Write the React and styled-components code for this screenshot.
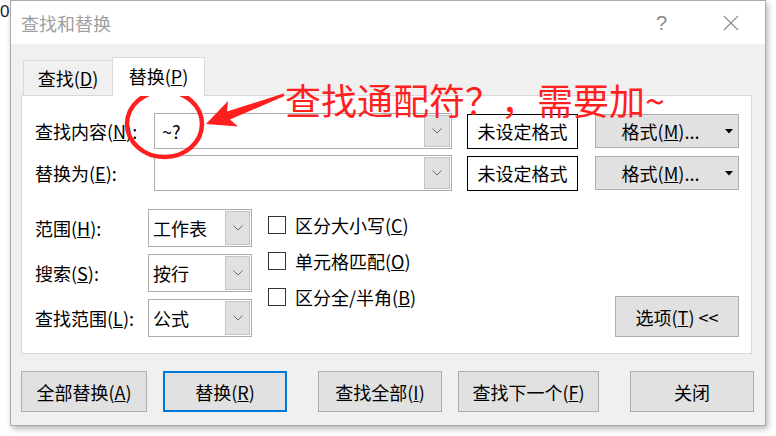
import React from "react";
import styled, { createGlobalStyle } from "styled-components";

const GlobalStyle = createGlobalStyle`
  html, body {
    margin: 0;
    padding: 0;
    background: #fff;
  }
  body {
    font-family: "Noto Sans CJK SC", "Noto Sans", sans-serif;
    color: #000;
  }
`;

const Page = styled.div`
  position: relative;
  display: flex;
  align-items: flex-start;
  width: 776px;
  height: 436px;
  overflow: hidden;
`;

const Stray = styled.span`
  width: 10px;
  padding-top: 3px;
  font: 17px/17px "Liberation Sans", sans-serif;
  color: #1c1c2c;
`;

const Window = styled.div`
  width: 756px;
  height: 426px;
  box-sizing: border-box;
  border: 1px solid #aaaaaa;
  box-shadow: 2px 3px 6px rgba(0, 0, 0, 0.28);
  background: #f0f0f0;
  display: flex;
  flex-direction: column;
`;

const TitleBar = styled.div`
  height: 43px;
  flex: none;
  background: #fff;
  display: flex;
  align-items: center;
  padding-left: 10px;
`;

const Title = styled.span`
  font-size: 18px;
  line-height: 20px;
  color: #a0a0a0;
  flex: 1;
`;

const CaptionButton = styled.div`
  width: 69px;
  height: 43px;
  display: flex;
  align-items: center;
  justify-content: center;
  color: #8a8a8a;
  font: 20px/1 "Liberation Sans", sans-serif;
`;

const Body = styled.div`
  flex: 1;
  display: flex;
  flex-direction: column;
  padding: 13px 0 0 10px;
`;

const TabStrip = styled.div`
  display: flex;
  align-items: flex-end;
  margin-left: 2px;
  margin-bottom: -1px;
  position: relative;
  z-index: 1;
`;

const Tab = styled.div`
  box-sizing: border-box;
  width: ${(p) => (p.$active ? 93 : 90)}px;
  height: ${(p) => (p.$active ? 39 : 36)}px;
  margin-left: ${(p) => (p.$active ? -1 : 0)}px;
  border: 1px solid #d9d9d9;
  border-bottom: ${(p) => (p.$active ? "none" : "1px solid #d9d9d9")};
  background: ${(p) => (p.$active ? "#fff" : "#f0f0f0")};
  display: flex;
  align-items: center;
  justify-content: center;
  font-size: 18px;
  padding-bottom: ${(p) => (p.$active ? 2 : 0)}px;
`;

const Panel = styled.div`
  box-sizing: border-box;
  width: 731px;
  height: 259px;
  border: 1px solid #d9d9d9;
  background: #fff;
  padding: 17px 12px 0 13px;
  display: flex;
  flex-direction: column;
`;

const FieldRow = styled.div`
  display: flex;
  align-items: center;
  height: 36px;
  & + & {
    margin-top: 6px;
  }
`;

const Label = styled.span`
  width: ${(p) => p.$width}px;
  flex: none;
  font-size: 18px;
  white-space: nowrap;
`;

const Combo = styled.div`
  box-sizing: border-box;
  width: ${(p) => p.$width}px;
  height: ${(p) => p.$height}px;
  border: 1px solid #acacac;
  background: #fff;
  display: flex;
  align-items: stretch;
  padding: 1px;
`;

const ComboText = styled.span`
  flex: 1;
  display: flex;
  align-items: center;
  padding-left: ${(p) => p.$pad}px;
  font-size: 18px;
`;

const DropButton = styled.span`
  box-sizing: border-box;
  width: ${(p) => p.$width}px;
  border: 1px solid #c4c4c4;
  background: #e1e1e1;
  display: flex;
  align-items: center;
  justify-content: center;
`;

const FormatBox = styled.div`
  box-sizing: border-box;
  width: 111px;
  height: 35px;
  margin-left: 15px;
  border: 1px solid #000;
  display: flex;
  align-items: center;
  justify-content: center;
  font-size: 18px;
`;

const Button = styled.div`
  box-sizing: border-box;
  width: ${(p) => p.$width}px;
  height: ${(p) => p.$height || 41}px;
  margin-left: ${(p) => p.$gap || 0}px;
  border: ${(p) => (p.$primary ? "2px solid #0078d7" : "1px solid #adadad")};
  background: #e1e1e1;
  display: flex;
  align-items: center;
  justify-content: center;
  font-size: 18px;
  white-space: nowrap;
`;

const FormatButton = styled(Button)`
  justify-content: flex-start;
  padding-right: 5px;
  span {
    flex: 1;
    text-align: center;
  }
`;

const Lower = styled.div`
  display: flex;
  margin-top: 18px;
`;

const OptionGrid = styled.div`
  display: grid;
  grid-template-columns: 113px 104px;
  row-gap: 7px;
  align-items: center;
`;

const CheckList = styled.div`
  display: flex;
  flex-direction: column;
  gap: 18px;
  margin-left: 16px;
  padding-top: 7px;
`;

const CheckRow = styled.label`
  display: flex;
  align-items: center;
  height: 18px;
  gap: 9px;
  font-size: 18px;
  white-space: nowrap;
`;

const Box = styled.span`
  box-sizing: border-box;
  width: 18px;
  height: 18px;
  border: 1px solid #333;
  background: #fff;
`;

const OptionsButton = styled(Button)`
  margin-left: auto;
  align-self: flex-end;
`;

const BottomBar = styled.div`
  display: flex;
  margin-top: 17px;
`;

const Overlay = styled.svg`
  position: absolute;
  left: 0;
  top: 0;
  pointer-events: none;
`;

const Note = styled.div`
  position: absolute;
  left: 285px;
  top: 81px;
  font-size: 36px;
  line-height: 36px;
  color: #ff1f1f;
  white-space: nowrap;
`;

function Chevron() {
  return (
    <svg width="10" height="6" viewBox="0 0 10 6">
      <path d="M0.5 0.5 L5 5 L9.5 0.5" fill="none" stroke="#6a6a6a" strokeWidth="1" />
    </svg>
  );
}

function Caret() {
  return (
    <svg width="8" height="5" viewBox="0 0 8 5">
      <path d="M0 0 H8 L4 4.5 Z" fill="#000" />
    </svg>
  );
}

function CloseGlyph() {
  return (
    <svg width="16" height="16" viewBox="0 0 16 16">
      <path d="M1 1 L15 15 M15 1 L1 15" stroke="#8a8a8a" strokeWidth="1.1" />
    </svg>
  );
}

function ComboBox({ width, height, text, pad, buttonWidth }) {
  return (
    <Combo $width={width} $height={height}>
      <ComboText $pad={pad}>{text}</ComboText>
      <DropButton $width={buttonWidth}>
        <Chevron />
      </DropButton>
    </Combo>
  );
}

const options = [
  { label: <>范围(<u>H</u>):</>, value: "工作表" },
  { label: <>搜索(<u>S</u>):</>, value: "按行" },
  { label: <>查找范围(<u>L</u>):</>, value: "公式" },
];

const checks = [
  <>区分大小写(<u>C</u>)</>,
  <>单元格匹配(<u>O</u>)</>,
  <>区分全/半角(<u>B</u>)</>,
];

export default function App() {
  return (
    <Page>
      <GlobalStyle />
      <Stray>0</Stray>
      <Window>
        <TitleBar>
          <Title>查找和替换</Title>
          <CaptionButton>?</CaptionButton>
          <CaptionButton>
            <CloseGlyph />
          </CaptionButton>
        </TitleBar>
        <Body>
          <TabStrip>
            <Tab>查找(<u>D</u>)</Tab>
            <Tab $active>替换(<u>P</u>)</Tab>
          </TabStrip>
          <Panel>
            <FieldRow>
              <Label $width={119}>查找内容(<u>N</u>):</Label>
              <ComboBox width={298} height={36} text="~?" pad={6} buttonWidth={26} />
              <FormatBox>未设定格式</FormatBox>
              <FormatButton $width={144} $height={34} $gap={17}>
                <span>格式(<u>M</u>)...</span>
                <Caret />
              </FormatButton>
            </FieldRow>
            <FieldRow>
              <Label $width={119}>替换为(<u>E</u>):</Label>
              <ComboBox width={298} height={36} text="" pad={6} buttonWidth={26} />
              <FormatBox>未设定格式</FormatBox>
              <FormatButton $width={144} $height={34} $gap={17}>
                <span>格式(<u>M</u>)...</span>
                <Caret />
              </FormatButton>
            </FieldRow>
            <Lower>
              <OptionGrid>
                {options.map((o, i) => (
                  <React.Fragment key={i}>
                    <Label $width={113}>{o.label}</Label>
                    <ComboBox width={104} height={38} text={o.value} pad={3} buttonWidth={25} />
                  </React.Fragment>
                ))}
              </OptionGrid>
              <CheckList>
                {checks.map((c, i) => (
                  <CheckRow key={i}>
                    <Box />
                    <span>{c}</span>
                  </CheckRow>
                ))}
              </CheckList>
              <OptionsButton $width={124} $height={41}>
                选项(<u>T</u>) &lt;&lt;
              </OptionsButton>
            </Lower>
          </Panel>
          <BottomBar>
            <Button $width={126}>全部替换(<u>A</u>)</Button>
            <Button $width={124} $gap={16} $primary>替换(<u>R</u>)</Button>
            <Button $width={124} $gap={31}>查找全部(<u>I</u>)</Button>
            <Button $width={141} $gap={16}>查找下一个(<u>F</u>)</Button>
            <Button $width={124} $gap={31}>关闭</Button>
          </BottomBar>
        </Body>
      </Window>
      <Overlay width="776" height="436" viewBox="0 0 776 436">
        <ellipse cx="164.5" cy="124" rx="37.5" ry="33" fill="none" stroke="#ff1f1f" strokeWidth="4.5" />
        <polygon
          points="206,124 228,101 227,111.5 283.5,93.5 284.5,96 230,119.5 238,126.5"
          fill="#ff1f1f"
        />
      </Overlay>
      <Note>查找通配符？，需要加~</Note>
    </Page>
  );
}
